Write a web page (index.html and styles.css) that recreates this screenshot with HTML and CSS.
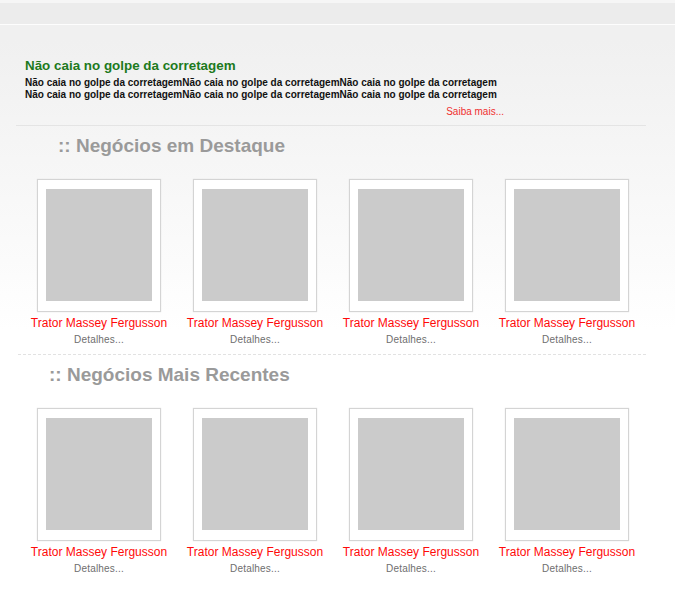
FILE: index.html
```html
<!DOCTYPE html>
<html lang="pt">
<head>
<meta charset="utf-8">
<link rel="stylesheet" href="styles.css">
</head>
<body>
<div class="topbar"></div>
<div class="page">
  <div class="notice">
    <h2 class="notice-title">Não caia no golpe da corretagem</h2>
    <p class="notice-text">Não caia no golpe da corretagemNão caia no golpe da corretagemNão caia no golpe da corretagem<br>Não caia no golpe da corretagemNão caia no golpe da corretagemNão caia no golpe da corretagem</p>
    <div class="more-row"><a class="more" href="#">Saiba mais...</a></div>
  </div>
  <div class="divider solid"></div>
  <h3 class="sec-title first">:: Negócios em Destaque</h3>
  <div class="grid">
    <div class="item"><div class="frame"><div class="photo"></div></div><div class="name">Trator Massey Fergusson</div><div class="det">Detalhes...</div></div>
    <div class="item"><div class="frame"><div class="photo"></div></div><div class="name">Trator Massey Fergusson</div><div class="det">Detalhes...</div></div>
    <div class="item"><div class="frame"><div class="photo"></div></div><div class="name">Trator Massey Fergusson</div><div class="det">Detalhes...</div></div>
    <div class="item"><div class="frame"><div class="photo"></div></div><div class="name">Trator Massey Fergusson</div><div class="det">Detalhes...</div></div>
  </div>
  <div class="divider dotted"></div>
  <h3 class="sec-title second">:: Negócios Mais Recentes</h3>
  <div class="grid grid-second">
    <div class="item"><div class="frame"><div class="photo"></div></div><div class="name">Trator Massey Fergusson</div><div class="det">Detalhes...</div></div>
    <div class="item"><div class="frame"><div class="photo"></div></div><div class="name">Trator Massey Fergusson</div><div class="det">Detalhes...</div></div>
    <div class="item"><div class="frame"><div class="photo"></div></div><div class="name">Trator Massey Fergusson</div><div class="det">Detalhes...</div></div>
    <div class="item"><div class="frame"><div class="photo"></div></div><div class="name">Trator Massey Fergusson</div><div class="det">Detalhes...</div></div>
  </div>
</div>
</body>
</html>
```
FILE: styles.css
```css
html, body {
  margin: 0;
  padding: 0;
}
body {
  font-family: "Liberation Sans", Arial, sans-serif;
  background: linear-gradient(to bottom, #f0f0f0 0px, #f0f0f0 40px, #fbfbfb 260px, #ffffff 330px) no-repeat;
  background-color: #fff;
  width: 675px;
  height: 592px;
  overflow: hidden;
}
.topbar {
  height: 21px;
  border-top: 3px solid #f6f6f6;
  border-bottom: 1px solid #fdfdfd;
  background: #ececec;
}
.notice {
  padding: 33px 0 0 25px;
  width: 480px;
}
.notice-title {
  margin: 0;
  font-size: 13.4px;
  line-height: 16px;
  font-weight: bold;
  color: #1d7a1d;
}
.notice-text {
  margin: 3px 0 0 0;
  font-size: 10px;
  line-height: 12px;
  font-weight: bold;
  color: #111;
  white-space: nowrap;
}
.more-row {
  display: flex;
  justify-content: flex-end;
  margin-top: 5px;
  margin-right: 1px;
}
.more {
  font-size: 10px;
  line-height: 12px;
  color: #f03030;
  text-decoration: none;
}
.divider {
  margin-left: 16px;
  width: 630px;
  height: 0;
}
.divider.solid {
  margin-top: 7px;
  border-top: 1px solid #e4e4e4;
}
.divider.dotted {
  margin-top: 8px;
  margin-left: 18px;
  width: 628px;
  border-top: 1px dashed #e2e2e2;
}
.sec-title {
  margin: 0;
  font-size: 19px;
  line-height: 22px;
  font-weight: bold;
  color: #9a9a9a;
}
.sec-title.first {
  margin: 9px 0 0 58px;
}
.sec-title.second {
  margin: 9px 0 0 49px;
}
.grid {
  display: grid;
  grid-template-columns: repeat(4, 156px);
  margin-left: 21px;
  margin-top: 22px;
}
.grid.grid-second {
  margin-top: 22px;
}
.item {
  display: flex;
  flex-direction: column;
  align-items: center;
}
.frame {
  width: 106px;
  height: 112px;
  padding: 9px 8px 10px 8px;
  background: #fff;
  border: 1px solid #d4d4d4;
  box-shadow: 0 0 1px #ddd;
}
.photo {
  width: 106px;
  height: 112px;
  background: #cbcbcb;
}
.name {
  margin-top: 4px;
  font-size: 12px;
  line-height: 14px;
  color: #ff0a0a;
  white-space: nowrap;
}
.det {
  margin-top: 4px;
  font-size: 10px;
  line-height: 12px;
  color: #6e6e6e;
  letter-spacing: 0.2px;
}
```
